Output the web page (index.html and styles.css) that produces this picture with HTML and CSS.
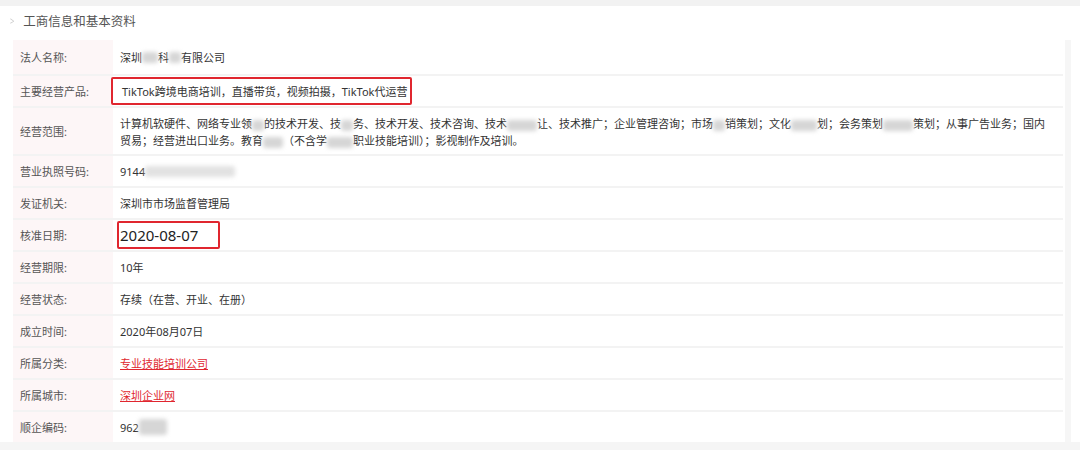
FILE: index.html
```html
<!DOCTYPE html>
<html lang="zh-CN">
<head>
    <meta charset="UTF-8">
    <title>工商信息和基本资料</title>
    <link rel="stylesheet" href="styles.css">
</head>
<body>
    <div class="topbar"></div>
    <div class="page">
        <!-- 标题 -->
        <div class="title">
            <span class="arrow">&gt;</span>
            <span>工商信息和基本资料</span>
        </div>
        <div class="wrap">
            <div class="table">
                <div class="row r1">
                    <div class="label">法人名称:</div>
                    <div class="value">深圳<span class="blur w16"></span>科<span class="blur w12"></span>有限公司</div>
                </div>
                <div class="row r2">
                    <div class="label">主要经营产品:</div>
                    <div class="value"><span class="mark mark-a">TikTok跨境电商培训，直播带货，视频拍摄，TikTok代运营</span></div>
                </div>
                <div class="row r3">
                    <div class="label">经营范围:</div>
                    <div class="value multi">
                        <div class="line">计算机软硬件、网络专业领<span class="blur w12"></span>的技术开发、技<span class="blur w12"></span>务、技术开发、技术咨询、技术<span class="blur w30"></span>让、技术推广；企业管理咨询；市场<span class="blur w12"></span>销策划；文化<span class="blur w26"></span>划；会务策划<span class="blur w30"></span>策划；从事广告业务；国内</div>
                        <div class="line">贸易；经营进出口业务。教育<span class="blur w20"></span>（不含学<span class="blur w26"></span>职业技能培训）；影视制作及培训。</div>
                    </div>
                </div>
                <div class="row">
                    <div class="label">营业执照号码:</div>
                    <div class="value">9144<span class="blur w90"></span></div>
                </div>
                <div class="row">
                    <div class="label">发证机关:</div>
                    <div class="value">深圳市市场监督管理局</div>
                </div>
                <div class="row">
                    <div class="label">核准日期:</div>
                    <div class="value"><span class="mark mark-b">2020-08-07</span></div>
                </div>
                <div class="row">
                    <div class="label">经营期限:</div>
                    <div class="value">10年</div>
                </div>
                <div class="row">
                    <div class="label">经营状态:</div>
                    <div class="value">存续（在营、开业、在册）</div>
                </div>
                <div class="row">
                    <div class="label">成立时间:</div>
                    <div class="value">2020年08月07日</div>
                </div>
                <div class="row">
                    <div class="label">所属分类:</div>
                    <div class="value"><a class="link" href="#">专业技能培训公司</a></div>
                </div>
                <div class="row">
                    <div class="label">所属城市:</div>
                    <div class="value"><a class="link" href="#">深圳企业网</a></div>
                </div>
                <div class="row last">
                    <div class="label">顺企编码:</div>
                    <div class="value">962<span class="blur w28"></span></div>
                </div>
            </div>
            <div class="scroll"></div>
        </div>
    </div>
    <div class="bottombar"></div>
</body>
</html>
```

FILE: styles.css
```css
/* 页面基础 */
body {
    margin: 0;
    background-color: #fff;
    font-family: "Noto Sans", "Noto Sans CJK SC", sans-serif;
    font-size: 11px;
    color: #333;
}

.topbar {
    height: 6px;
    background-color: #f2f2f2;
}

.bottombar {
    height: 10px;
    background-color: #f5f5f5;
}

/* 标题 */
.title {
    display: flex;
    align-items: center;
    gap: 8px;
    height: 28px;
    padding: 0 0 0 9px;
    margin-bottom: 6px;
    font-size: 12.5px;
    color: #555;
}

.title .arrow {
    color: #ccc;
    font-size: 11px;
    transform: scaleX(0.7);
}

/* 表格区域 */
.wrap {
    display: flex;
    gap: 2px;
    padding-left: 13px;
}

.table {
    width: 1050px;
}

.scroll {
    width: 6px;
    background-color: #f6f6f6;
}

.row {
    display: flex;
    height: 30px;
    border-bottom: 2px solid #f3f3f3;
}

.row.r1 {
    height: 34px;
}

.row.r3 {
    height: 46px;
}

.row.last {
    border-bottom: none;
}

.label {
    display: flex;
    align-items: center;
    flex-shrink: 0;
    width: 93px;
    padding-left: 7px;
    background-color: #fdf6f7;
    color: #555;
}

.value {
    display: flex;
    align-items: center;
    flex: 1;
    min-width: 0;
    padding-left: 7px;
    white-space: nowrap;
}

.value.multi {
    display: block;
    padding-top: 7px;
    line-height: 17px;
}

/* 红框标注 */
.mark {
    display: inline-flex;
    align-items: center;
    height: 24px;
    border: 2px solid #e0262f;
    border-radius: 2px;
}

.mark-a {
    margin-left: -9px;
    padding: 0 3px 0 9px;
}

.mark-b {
    margin-left: -3px;
    padding: 0 20px 0 1px;
    font-size: 15px;
    color: #222;
}

.link {
    color: #e0262f;
    text-decoration: underline;
}

/* 打码 */
.blur {
    display: inline-block;
    height: 11px;
    vertical-align: middle;
    background-color: #d6d6d6;
    border-radius: 3px;
    filter: blur(2px);
}

.w12 { width: 12px; }
.w16 { width: 16px; }
.w20 { width: 20px; }
.w26 { width: 26px; }
.w28 { width: 28px; height: 16px; }
.w30 { width: 30px; }
.w90 { width: 90px; background-color: #e2e2e2; }
```
